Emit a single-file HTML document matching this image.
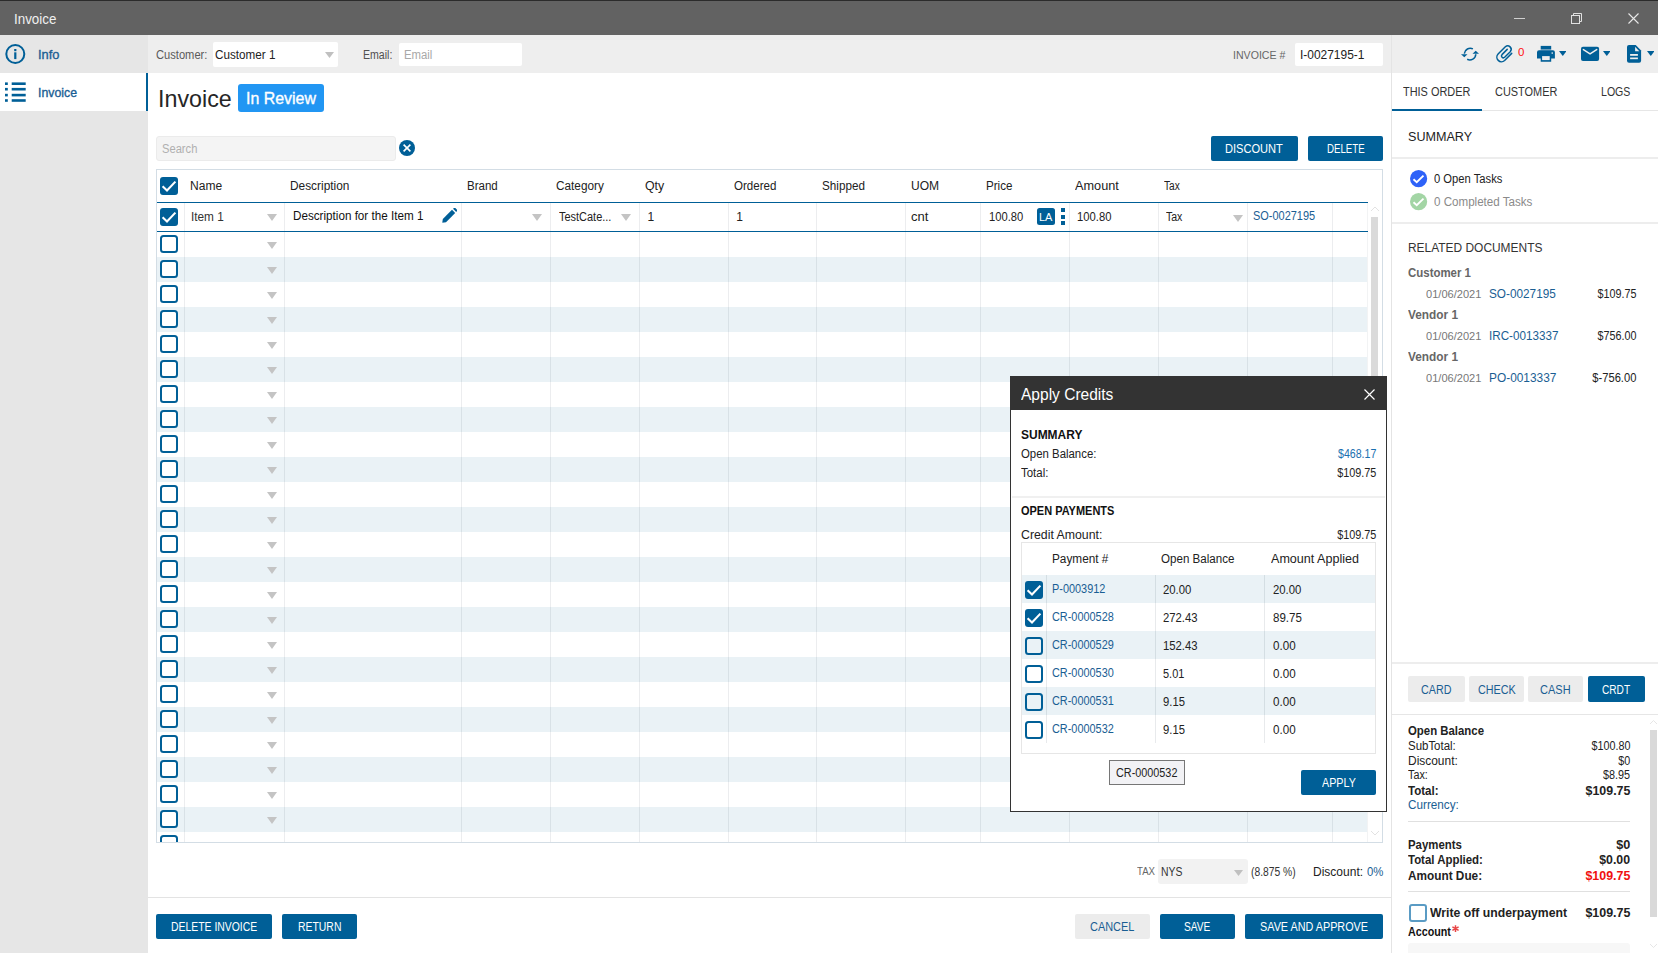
<!DOCTYPE html>
<html><head><meta charset="utf-8"><style>
html,body{margin:0;padding:0;width:1658px;height:953px;overflow:hidden;background:#fff;font-family:'Liberation Sans', sans-serif;}
.a{position:absolute;}
.t{white-space:nowrap;}
</style></head><body>
<div class="a" style="left:0px;top:0px;width:1658px;height:35px;background:#626262;"></div>
<div class="a" style="left:0px;top:0px;width:1658px;height:1px;background:#2b2b2b;"></div>
<span id="t1" class="a t" style="transform:scaleX(0.9558);transform-origin:left center;left:13.70px;top:12.15px;font-size:14px;line-height:14px;color:#f0f0f0;font-weight:normal;">Invoice</span>
<div class="a" style="left:1514px;top:18px;width:11px;height:1px;background:#d0d0d0;"></div>
<svg class="a" style="left:1570px;top:12px" width="13" height="12" viewBox="0 0 13 12"><rect x="1.5" y="3.5" width="8" height="8" fill="none" stroke="#e0e0e0" stroke-width="1"/><path d="M3.5 3.5 V1.5 H11.5 V9.5 H9.5" fill="none" stroke="#e0e0e0" stroke-width="1"/></svg>
<svg class="a" style="left:1628px;top:13px" width="11" height="11" viewBox="0 0 11 11"><path d="M0.5 0.5 L10.5 10.5 M10.5 0.5 L0.5 10.5" stroke="#e8e8e8" stroke-width="1.1"/></svg>
<div class="a" style="left:0px;top:35px;width:148px;height:918px;background:#e6e6e6;"></div>
<div class="a" style="left:0px;top:73px;width:146px;height:38px;background:#ffffff;"></div>
<div class="a" style="left:146px;top:73px;width:2px;height:38px;background:#005f97;"></div>
<svg class="a" style="left:5px;top:44px" width="21" height="21" viewBox="0 0 21 21"><circle cx="10.3" cy="10" r="9" fill="none" stroke="#005f97" stroke-width="2"/><rect x="9.2" y="8.3" width="2.2" height="6.8" fill="#005f97"/><rect x="9.2" y="5" width="2.2" height="2.2" fill="#005f97"/></svg>
<svg class="a" style="left:5px;top:82px" width="22" height="21" viewBox="0 0 22 21"><rect x="0" y="0.4" width="2.8" height="2.6" fill="#005f97"/><rect x="6.7" y="0.4" width="14" height="2.6" fill="#005f97"/><rect x="0" y="5.9" width="2.8" height="2.6" fill="#005f97"/><rect x="6.7" y="5.9" width="14" height="2.6" fill="#005f97"/><rect x="0" y="11.8" width="2.8" height="2.6" fill="#005f97"/><rect x="6.7" y="11.8" width="14" height="2.6" fill="#005f97"/><rect x="0" y="17.2" width="2.8" height="2.6" fill="#005f97"/><rect x="6.7" y="17.2" width="14" height="2.6" fill="#005f97"/></svg>
<span id="t2" class="a t" style="transform:scaleX(0.9867);transform-origin:left center;left:38.10px;top:47.60px;font-size:13px;line-height:13px;color:#1a5e93;font-weight:normal;-webkit-text-stroke:0.35px currentColor;">Info</span>
<span id="t3" class="a t" style="transform:scaleX(0.9465);transform-origin:left center;left:38.10px;top:86.00px;font-size:13px;line-height:13px;color:#1a5e93;font-weight:normal;-webkit-text-stroke:0.35px currentColor;">Invoice</span>
<div class="a" style="left:148px;top:35px;width:1243px;height:38px;background:#eeeeee;"></div>
<div class="a" style="left:1392px;top:35px;width:266px;height:38px;background:#eeeeee;"></div>
<div class="a" style="left:1391px;top:35px;width:1px;height:918px;background:#e4e4e4;"></div>
<span id="t4" class="a t" style="transform:scaleX(0.9285);transform-origin:left center;left:155.70px;top:48.84px;font-size:12px;line-height:12px;color:#5a5a5a;font-weight:normal;">Customer:</span>
<div class="a" style="left:213px;top:42px;width:125px;height:25px;background:#fff;border-radius:2px"></div>
<span id="t5" class="a t" style="transform:scaleX(0.9737);transform-origin:left center;left:214.70px;top:48.84px;font-size:12px;line-height:12px;color:#222;font-weight:normal;">Customer 1</span>
<svg class="a" style="left:325px;top:52px" width="9" height="6" viewBox="0 0 9 6"><path d="M0 0 L9 0 L4.5 6 Z" fill="#c0c0c0"/></svg>
<span id="t6" class="a t" style="transform:scaleX(0.8817);transform-origin:left center;left:362.70px;top:48.84px;font-size:12px;line-height:12px;color:#505050;font-weight:normal;">Email:</span>
<div class="a" style="left:399px;top:43px;width:123px;height:23px;background:#fff;border-radius:2px"></div>
<span id="t7" class="a t" style="transform:scaleX(0.9462);transform-origin:left center;left:403.70px;top:48.84px;font-size:12px;line-height:12px;color:#a8a8a8;font-weight:normal;">Email</span>
<span id="t8" class="a t" style="transform:scaleX(0.9631);transform-origin:left center;left:1232.70px;top:49.69px;font-size:11px;line-height:11px;color:#666;font-weight:normal;">INVOICE #</span>
<div class="a" style="left:1295px;top:43px;width:88px;height:23px;background:#fff;border-radius:2px"></div>
<span id="t9" class="a t" style="transform:scaleX(0.9951);transform-origin:left center;left:1299.70px;top:48.84px;font-size:12px;line-height:12px;color:#222;font-weight:normal;">I-0027195-1</span>
<svg class="a" style="left:1456px;top:42px" width="28" height="24" viewBox="0 0 28 24">
<path d="M16.9 6.9 A6 6 0 0 0 8.3 11.6" fill="none" stroke="#005f97" stroke-width="1.5"/>
<path d="M5 12.2 L11.5 12.2 L8.3 15.3 Z" fill="#005f97"/>
<path d="M11.2 17.3 A6 6 0 0 0 19.8 12.2" fill="none" stroke="#005f97" stroke-width="1.5"/>
<path d="M16.5 11.8 L23 11.8 L19.7 8.7 Z" fill="#005f97"/>
</svg>
<svg class="a" style="left:1490px;top:40px" width="26" height="26" viewBox="0 0 26 26">
<path d="M21.7 13.4 L14.6 20.5 A4.6 4.6 0 0 1 8.1 14.0 L15.33 6.77 A3.47 3.47 0 0 1 20.23 11.67 L14.62 17.27 A1.87 1.87 0 0 1 11.98 14.63 L17.2 9.4" fill="none" stroke="#005f97" stroke-width="1.5" stroke-linecap="round"/>
</svg>
<span id="t10" class="a t" style="transform:scaleX(1.0449);transform-origin:left center;left:1517.80px;top:46.69px;font-size:11px;line-height:11px;color:#ff1010;font-weight:normal;">0</span>
<svg class="a" style="left:1532px;top:40px" width="26" height="26" viewBox="0 0 26 26">
<rect x="8.7" y="5.9" width="10.5" height="3.4" fill="#005f97"/>
<rect x="8.7" y="9.3" width="10.5" height="1" fill="#005f97" opacity="0.5"/>
<path d="M7 10.2 H20.9 A2 2 0 0 1 22.9 12.2 V18.6 H19.2 V21.8 H8.7 V18.6 H5 V12.2 A2 2 0 0 1 7 10.2 Z" fill="#005f97"/>
<rect x="10.1" y="16.1" width="7.6" height="4" fill="#eeeeee"/>
<circle cx="20.2" cy="13.1" r="0.8" fill="#eeeeee"/>
</svg>
<svg class="a" style="left:1558.6px;top:50.9px" width="7.6" height="4.9" viewBox="0 0 7.6 4.9"><path d="M0 0 L7.6 0 L3.8 4.9 Z" fill="#005f97"/></svg>
<svg class="a" style="left:1576px;top:40px" width="26" height="26" viewBox="0 0 26 26">
<rect x="5" y="6.7" width="18.1" height="14.4" rx="2" fill="#005f97"/>
<path d="M7.4 9.6 L14.05 13.8 L20.7 9.6" fill="none" stroke="#eeeeee" stroke-width="1.5" stroke-linecap="round"/>
</svg>
<svg class="a" style="left:1602.6px;top:50.9px" width="7.6" height="4.9" viewBox="0 0 7.6 4.9"><path d="M0 0 L7.6 0 L3.8 4.9 Z" fill="#005f97"/></svg>
<svg class="a" style="left:1620px;top:40px" width="26" height="26" viewBox="0 0 26 26">
<path d="M9 4.9 H15.7 L21.1 10.4 V20.8 A2 2 0 0 1 19.1 22.8 H9 A2 2 0 0 1 7 20.8 V6.9 A2 2 0 0 1 9 4.9 Z" fill="#005f97"/>
<path d="M15.1 6.8 V11.3 H19.3 Z" fill="#eeeeee"/>
<rect x="10.1" y="14" width="7.8" height="1.8" fill="#eeeeee"/><rect x="10.1" y="17.5" width="7.8" height="1.7" fill="#eeeeee"/>
</svg>
<svg class="a" style="left:1646.6px;top:50.9px" width="7.6" height="4.9" viewBox="0 0 7.6 4.9"><path d="M0 0 L7.6 0 L3.8 4.9 Z" fill="#005f97"/></svg>
<span id="t11" class="a t" style="transform:scaleX(0.9691);transform-origin:left center;left:157.60px;top:86.68px;font-size:24px;line-height:24px;color:#262626;font-weight:normal;">Invoice</span>
<div class="a" style="left:238px;top:84px;width:86px;height:28px;background:#2196f3;border-radius:3px"></div>
<span id="t12" class="a t" style="transform:scaleX(0.9964);transform-origin:left center;left:245.70px;top:91.36px;font-size:16px;line-height:16px;color:#fff;font-weight:normal;-webkit-text-stroke:0.35px currentColor;">In Review</span>
<div class="a" style="left:156px;top:136px;width:240px;height:25px;background:#f4f4f4;border:1px solid #ebebeb;box-sizing:border-box;border-radius:3px"></div>
<span id="t13" class="a t" style="transform:scaleX(0.9308);transform-origin:left center;left:161.70px;top:142.54px;font-size:12px;line-height:12px;color:#b0b0b0;font-weight:normal;">Search</span>
<svg class="a" style="left:399px;top:140px" width="16" height="16" viewBox="0 0 16 16"><circle cx="8" cy="8" r="8" fill="#005f97"/><path d="M4.6 4.6 L11.4 11.4 M11.4 4.6 L4.6 11.4" stroke="#fff" stroke-width="1.6"/></svg>
<div class="a" style="left:1211px;top:136px;width:87px;height:25px;background:#005f97;border-radius:2px"></div>
<span id="t14" class="a t" style="transform:scaleX(0.9239);transform-origin:left center;left:1225.45px;top:142.74px;font-size:12px;line-height:12px;color:#fff;font-weight:normal;">DISCOUNT</span>
<div class="a" style="left:1308px;top:136px;width:75px;height:25px;background:#005f97;border-radius:2px"></div>
<span id="t15" class="a t" style="transform:scaleX(0.8075);transform-origin:left center;left:1326.55px;top:142.74px;font-size:12px;line-height:12px;color:#fff;font-weight:normal;">DELETE</span>
<div class="a" style="left:156px;top:169px;width:1227px;height:674px;background:transparent;border:1px solid #d3dde5;box-sizing:border-box"></div>
<div class="a" style="left:157px;top:232px;width:1210px;height:25px;background:#fff;"></div>
<div class="a" style="left:157px;top:257px;width:1210px;height:25px;background:#eaf2f6;"></div>
<div class="a" style="left:157px;top:282px;width:1210px;height:25px;background:#fff;"></div>
<div class="a" style="left:157px;top:307px;width:1210px;height:25px;background:#eaf2f6;"></div>
<div class="a" style="left:157px;top:332px;width:1210px;height:25px;background:#fff;"></div>
<div class="a" style="left:157px;top:357px;width:1210px;height:25px;background:#eaf2f6;"></div>
<div class="a" style="left:157px;top:382px;width:1210px;height:25px;background:#fff;"></div>
<div class="a" style="left:157px;top:407px;width:1210px;height:25px;background:#eaf2f6;"></div>
<div class="a" style="left:157px;top:432px;width:1210px;height:25px;background:#fff;"></div>
<div class="a" style="left:157px;top:457px;width:1210px;height:25px;background:#eaf2f6;"></div>
<div class="a" style="left:157px;top:482px;width:1210px;height:25px;background:#fff;"></div>
<div class="a" style="left:157px;top:507px;width:1210px;height:25px;background:#eaf2f6;"></div>
<div class="a" style="left:157px;top:532px;width:1210px;height:25px;background:#fff;"></div>
<div class="a" style="left:157px;top:557px;width:1210px;height:25px;background:#eaf2f6;"></div>
<div class="a" style="left:157px;top:582px;width:1210px;height:25px;background:#fff;"></div>
<div class="a" style="left:157px;top:607px;width:1210px;height:25px;background:#eaf2f6;"></div>
<div class="a" style="left:157px;top:632px;width:1210px;height:25px;background:#fff;"></div>
<div class="a" style="left:157px;top:657px;width:1210px;height:25px;background:#eaf2f6;"></div>
<div class="a" style="left:157px;top:682px;width:1210px;height:25px;background:#fff;"></div>
<div class="a" style="left:157px;top:707px;width:1210px;height:25px;background:#eaf2f6;"></div>
<div class="a" style="left:157px;top:732px;width:1210px;height:25px;background:#fff;"></div>
<div class="a" style="left:157px;top:757px;width:1210px;height:25px;background:#eaf2f6;"></div>
<div class="a" style="left:157px;top:782px;width:1210px;height:25px;background:#fff;"></div>
<div class="a" style="left:157px;top:807px;width:1210px;height:25px;background:#eaf2f6;"></div>
<div class="a" style="left:157px;top:832px;width:1210px;height:10px;background:#fff;"></div>
<div class="a" style="left:184px;top:203px;width:1px;height:639px;background:rgba(0,20,40,0.075);"></div>
<div class="a" style="left:284px;top:203px;width:1px;height:639px;background:rgba(0,20,40,0.075);"></div>
<div class="a" style="left:461px;top:203px;width:1px;height:639px;background:rgba(0,20,40,0.075);"></div>
<div class="a" style="left:550px;top:203px;width:1px;height:639px;background:rgba(0,20,40,0.075);"></div>
<div class="a" style="left:639px;top:203px;width:1px;height:639px;background:rgba(0,20,40,0.075);"></div>
<div class="a" style="left:728px;top:203px;width:1px;height:639px;background:rgba(0,20,40,0.075);"></div>
<div class="a" style="left:816px;top:203px;width:1px;height:639px;background:rgba(0,20,40,0.075);"></div>
<div class="a" style="left:905px;top:203px;width:1px;height:639px;background:rgba(0,20,40,0.075);"></div>
<div class="a" style="left:980px;top:203px;width:1px;height:639px;background:rgba(0,20,40,0.075);"></div>
<div class="a" style="left:1069px;top:203px;width:1px;height:639px;background:rgba(0,20,40,0.075);"></div>
<div class="a" style="left:1158px;top:203px;width:1px;height:639px;background:rgba(0,20,40,0.075);"></div>
<div class="a" style="left:1247px;top:203px;width:1px;height:639px;background:rgba(0,20,40,0.075);"></div>
<div class="a" style="left:1332px;top:203px;width:1px;height:639px;background:rgba(0,20,40,0.075);"></div>
<svg class="a" style="left:160px;top:177px" width="18" height="18" viewBox="0 0 18 18"><rect x="0" y="0" width="18" height="18" rx="3" fill="#005f97"/><path d="M2.6 9.2 L7 13.4 L15.4 4.6" fill="none" stroke="#fff" stroke-width="2.1"/></svg>
<span id="t16" class="a t" style="transform:scaleX(1.0026);transform-origin:left center;left:190.10px;top:179.84px;font-size:12px;line-height:12px;color:#222;font-weight:normal;">Name</span>
<span id="t17" class="a t" style="transform:scaleX(0.9895);transform-origin:left center;left:290.10px;top:179.84px;font-size:12px;line-height:12px;color:#222;font-weight:normal;">Description</span>
<span id="t18" class="a t" style="transform:scaleX(0.9616);transform-origin:left center;left:466.70px;top:179.84px;font-size:12px;line-height:12px;color:#222;font-weight:normal;">Brand</span>
<span id="t19" class="a t" style="transform:scaleX(0.9815);transform-origin:left center;left:556.00px;top:179.84px;font-size:12px;line-height:12px;color:#222;font-weight:normal;">Category</span>
<span id="t20" class="a t" style="transform:scaleX(1.0283);transform-origin:left center;left:644.70px;top:179.84px;font-size:12px;line-height:12px;color:#222;font-weight:normal;">Qty</span>
<span id="t21" class="a t" style="transform:scaleX(0.9630);transform-origin:left center;left:734.20px;top:179.84px;font-size:12px;line-height:12px;color:#222;font-weight:normal;">Ordered</span>
<span id="t22" class="a t" style="transform:scaleX(0.9740);transform-origin:left center;left:821.90px;top:179.84px;font-size:12px;line-height:12px;color:#222;font-weight:normal;">Shipped</span>
<span id="t23" class="a t" style="transform:scaleX(1.0036);transform-origin:left center;left:910.90px;top:179.84px;font-size:12px;line-height:12px;color:#222;font-weight:normal;">UOM</span>
<span id="t24" class="a t" style="transform:scaleX(0.9655);transform-origin:left center;left:986.00px;top:179.84px;font-size:12px;line-height:12px;color:#222;font-weight:normal;">Price</span>
<span id="t25" class="a t" style="transform:scaleX(1.0590);transform-origin:left center;left:1075.00px;top:179.84px;font-size:12px;line-height:12px;color:#222;font-weight:normal;">Amount</span>
<span id="t26" class="a t" style="transform:scaleX(0.8455);transform-origin:left center;left:1164.20px;top:179.84px;font-size:12px;line-height:12px;color:#222;font-weight:normal;">Tax</span>
<div class="a" style="left:157px;top:202px;width:1211px;height:1px;background:#005f97;"></div>
<div class="a" style="left:157px;top:231px;width:1211px;height:1px;background:#005f97;"></div>
<svg class="a" style="left:160px;top:208px" width="18" height="18" viewBox="0 0 18 18"><rect x="0" y="0" width="18" height="18" rx="3" fill="#005f97"/><path d="M2.6 9.2 L7 13.4 L15.4 4.6" fill="none" stroke="#fff" stroke-width="2.1"/></svg>
<span id="t27" class="a t" style="transform:scaleX(0.9832);transform-origin:left center;left:191.20px;top:211.04px;font-size:12px;line-height:12px;color:#333;font-weight:normal;">Item 1</span>
<svg class="a" style="left:267px;top:214px" width="10" height="7" viewBox="0 0 10 7"><path d="M0 0 L10 0 L5.0 7 Z" fill="#c4c4c4"/></svg>
<span id="t28" class="a t" style="transform:scaleX(0.9727);transform-origin:left center;left:293.20px;top:210.34px;font-size:12px;line-height:12px;color:#111;font-weight:normal;">Description for the Item 1</span>
<svg class="a" style="left:441.6px;top:208.4px" width="15" height="15" viewBox="0 0 15 15"><path d="M0.3 14.7 L0.8 11 L10 1.8 L13.2 5 L4 14.2 Z" fill="#005f97"/><path d="M11 0.8 L12 0 A1 1 0 0 1 13.3 0 L15 1.7 A1 1 0 0 1 15 3 L14.2 4" fill="#005f97"/></svg>
<svg class="a" style="left:532px;top:214px" width="10" height="7" viewBox="0 0 10 7"><path d="M0 0 L10 0 L5.0 7 Z" fill="#c4c4c4"/></svg>
<span id="t29" class="a t" style="transform:scaleX(0.9135);transform-origin:left center;left:559.10px;top:211.04px;font-size:12px;line-height:12px;color:#222;font-weight:normal;">TestCate...</span>
<svg class="a" style="left:621px;top:214px" width="10" height="7" viewBox="0 0 10 7"><path d="M0 0 L10 0 L5.0 7 Z" fill="#c4c4c4"/></svg>
<span id="t30" class="a t" style="left:647.40px;top:211.34px;font-size:12px;line-height:12px;color:#222;font-weight:normal;">1</span>
<span id="t31" class="a t" style="left:736.30px;top:211.34px;font-size:12px;line-height:12px;color:#222;font-weight:normal;">1</span>
<span id="t32" class="a t" style="transform:scaleX(1.0864);transform-origin:left center;left:910.90px;top:210.64px;font-size:12px;line-height:12px;color:#222;font-weight:normal;">cnt</span>
<span id="t33" class="a t" style="transform:scaleX(0.9318);transform-origin:left center;left:988.70px;top:211.34px;font-size:12px;line-height:12px;color:#222;font-weight:normal;">100.80</span>
<svg class="a" style="left:1037px;top:208px" width="18" height="17" viewBox="0 0 18 17"><rect width="18" height="17" rx="2.5" fill="#005f97"/></svg>
<span id="t34" class="a t" style="transform:scaleX(0.9949);transform-origin:left center;left:1039.20px;top:211.69px;font-size:11px;line-height:11px;color:#fff;font-weight:normal;">LA</span>
<div class="a" style="left:1061px;top:208px;width:4px;height:4px;background:#005f97;"></div>
<div class="a" style="left:1061px;top:214.5px;width:4px;height:4px;background:#005f97;"></div>
<div class="a" style="left:1061px;top:221px;width:4px;height:4px;background:#005f97;"></div>
<span id="t35" class="a t" style="transform:scaleX(0.9372);transform-origin:left center;left:1077.40px;top:211.34px;font-size:12px;line-height:12px;color:#222;font-weight:normal;">100.80</span>
<span id="t36" class="a t" style="transform:scaleX(0.8776);transform-origin:left center;left:1165.50px;top:211.34px;font-size:12px;line-height:12px;color:#222;font-weight:normal;">Tax</span>
<svg class="a" style="left:1233px;top:215px" width="10" height="7" viewBox="0 0 10 7"><path d="M0 0 L10 0 L5.0 7 Z" fill="#c4c4c4"/></svg>
<span id="t37" class="a t" style="transform:scaleX(0.9124);transform-origin:left center;left:1252.70px;top:210.44px;font-size:12px;line-height:12px;color:#1a5e93;font-weight:normal;">SO-0027195</span>
<svg class="a" style="left:160px;top:235px" width="18" height="18" viewBox="0 0 18 18"><rect x="1" y="1" width="16" height="16" rx="2.5" fill="#fff" stroke="#005f97" stroke-width="2"/></svg>
<svg class="a" style="left:267px;top:242px" width="10" height="7" viewBox="0 0 10 7"><path d="M0 0 L10 0 L5.0 7 Z" fill="#c4c4c4"/></svg>
<svg class="a" style="left:160px;top:260px" width="18" height="18" viewBox="0 0 18 18"><rect x="1" y="1" width="16" height="16" rx="2.5" fill="#fff" stroke="#005f97" stroke-width="2"/></svg>
<svg class="a" style="left:267px;top:267px" width="10" height="7" viewBox="0 0 10 7"><path d="M0 0 L10 0 L5.0 7 Z" fill="#c4c4c4"/></svg>
<svg class="a" style="left:160px;top:285px" width="18" height="18" viewBox="0 0 18 18"><rect x="1" y="1" width="16" height="16" rx="2.5" fill="#fff" stroke="#005f97" stroke-width="2"/></svg>
<svg class="a" style="left:267px;top:292px" width="10" height="7" viewBox="0 0 10 7"><path d="M0 0 L10 0 L5.0 7 Z" fill="#c4c4c4"/></svg>
<svg class="a" style="left:160px;top:310px" width="18" height="18" viewBox="0 0 18 18"><rect x="1" y="1" width="16" height="16" rx="2.5" fill="#fff" stroke="#005f97" stroke-width="2"/></svg>
<svg class="a" style="left:267px;top:317px" width="10" height="7" viewBox="0 0 10 7"><path d="M0 0 L10 0 L5.0 7 Z" fill="#c4c4c4"/></svg>
<svg class="a" style="left:160px;top:335px" width="18" height="18" viewBox="0 0 18 18"><rect x="1" y="1" width="16" height="16" rx="2.5" fill="#fff" stroke="#005f97" stroke-width="2"/></svg>
<svg class="a" style="left:267px;top:342px" width="10" height="7" viewBox="0 0 10 7"><path d="M0 0 L10 0 L5.0 7 Z" fill="#c4c4c4"/></svg>
<svg class="a" style="left:160px;top:360px" width="18" height="18" viewBox="0 0 18 18"><rect x="1" y="1" width="16" height="16" rx="2.5" fill="#fff" stroke="#005f97" stroke-width="2"/></svg>
<svg class="a" style="left:267px;top:367px" width="10" height="7" viewBox="0 0 10 7"><path d="M0 0 L10 0 L5.0 7 Z" fill="#c4c4c4"/></svg>
<svg class="a" style="left:160px;top:385px" width="18" height="18" viewBox="0 0 18 18"><rect x="1" y="1" width="16" height="16" rx="2.5" fill="#fff" stroke="#005f97" stroke-width="2"/></svg>
<svg class="a" style="left:267px;top:392px" width="10" height="7" viewBox="0 0 10 7"><path d="M0 0 L10 0 L5.0 7 Z" fill="#c4c4c4"/></svg>
<svg class="a" style="left:160px;top:410px" width="18" height="18" viewBox="0 0 18 18"><rect x="1" y="1" width="16" height="16" rx="2.5" fill="#fff" stroke="#005f97" stroke-width="2"/></svg>
<svg class="a" style="left:267px;top:417px" width="10" height="7" viewBox="0 0 10 7"><path d="M0 0 L10 0 L5.0 7 Z" fill="#c4c4c4"/></svg>
<svg class="a" style="left:160px;top:435px" width="18" height="18" viewBox="0 0 18 18"><rect x="1" y="1" width="16" height="16" rx="2.5" fill="#fff" stroke="#005f97" stroke-width="2"/></svg>
<svg class="a" style="left:267px;top:442px" width="10" height="7" viewBox="0 0 10 7"><path d="M0 0 L10 0 L5.0 7 Z" fill="#c4c4c4"/></svg>
<svg class="a" style="left:160px;top:460px" width="18" height="18" viewBox="0 0 18 18"><rect x="1" y="1" width="16" height="16" rx="2.5" fill="#fff" stroke="#005f97" stroke-width="2"/></svg>
<svg class="a" style="left:267px;top:467px" width="10" height="7" viewBox="0 0 10 7"><path d="M0 0 L10 0 L5.0 7 Z" fill="#c4c4c4"/></svg>
<svg class="a" style="left:160px;top:485px" width="18" height="18" viewBox="0 0 18 18"><rect x="1" y="1" width="16" height="16" rx="2.5" fill="#fff" stroke="#005f97" stroke-width="2"/></svg>
<svg class="a" style="left:267px;top:492px" width="10" height="7" viewBox="0 0 10 7"><path d="M0 0 L10 0 L5.0 7 Z" fill="#c4c4c4"/></svg>
<svg class="a" style="left:160px;top:510px" width="18" height="18" viewBox="0 0 18 18"><rect x="1" y="1" width="16" height="16" rx="2.5" fill="#fff" stroke="#005f97" stroke-width="2"/></svg>
<svg class="a" style="left:267px;top:517px" width="10" height="7" viewBox="0 0 10 7"><path d="M0 0 L10 0 L5.0 7 Z" fill="#c4c4c4"/></svg>
<svg class="a" style="left:160px;top:535px" width="18" height="18" viewBox="0 0 18 18"><rect x="1" y="1" width="16" height="16" rx="2.5" fill="#fff" stroke="#005f97" stroke-width="2"/></svg>
<svg class="a" style="left:267px;top:542px" width="10" height="7" viewBox="0 0 10 7"><path d="M0 0 L10 0 L5.0 7 Z" fill="#c4c4c4"/></svg>
<svg class="a" style="left:160px;top:560px" width="18" height="18" viewBox="0 0 18 18"><rect x="1" y="1" width="16" height="16" rx="2.5" fill="#fff" stroke="#005f97" stroke-width="2"/></svg>
<svg class="a" style="left:267px;top:567px" width="10" height="7" viewBox="0 0 10 7"><path d="M0 0 L10 0 L5.0 7 Z" fill="#c4c4c4"/></svg>
<svg class="a" style="left:160px;top:585px" width="18" height="18" viewBox="0 0 18 18"><rect x="1" y="1" width="16" height="16" rx="2.5" fill="#fff" stroke="#005f97" stroke-width="2"/></svg>
<svg class="a" style="left:267px;top:592px" width="10" height="7" viewBox="0 0 10 7"><path d="M0 0 L10 0 L5.0 7 Z" fill="#c4c4c4"/></svg>
<svg class="a" style="left:160px;top:610px" width="18" height="18" viewBox="0 0 18 18"><rect x="1" y="1" width="16" height="16" rx="2.5" fill="#fff" stroke="#005f97" stroke-width="2"/></svg>
<svg class="a" style="left:267px;top:617px" width="10" height="7" viewBox="0 0 10 7"><path d="M0 0 L10 0 L5.0 7 Z" fill="#c4c4c4"/></svg>
<svg class="a" style="left:160px;top:635px" width="18" height="18" viewBox="0 0 18 18"><rect x="1" y="1" width="16" height="16" rx="2.5" fill="#fff" stroke="#005f97" stroke-width="2"/></svg>
<svg class="a" style="left:267px;top:642px" width="10" height="7" viewBox="0 0 10 7"><path d="M0 0 L10 0 L5.0 7 Z" fill="#c4c4c4"/></svg>
<svg class="a" style="left:160px;top:660px" width="18" height="18" viewBox="0 0 18 18"><rect x="1" y="1" width="16" height="16" rx="2.5" fill="#fff" stroke="#005f97" stroke-width="2"/></svg>
<svg class="a" style="left:267px;top:667px" width="10" height="7" viewBox="0 0 10 7"><path d="M0 0 L10 0 L5.0 7 Z" fill="#c4c4c4"/></svg>
<svg class="a" style="left:160px;top:685px" width="18" height="18" viewBox="0 0 18 18"><rect x="1" y="1" width="16" height="16" rx="2.5" fill="#fff" stroke="#005f97" stroke-width="2"/></svg>
<svg class="a" style="left:267px;top:692px" width="10" height="7" viewBox="0 0 10 7"><path d="M0 0 L10 0 L5.0 7 Z" fill="#c4c4c4"/></svg>
<svg class="a" style="left:160px;top:710px" width="18" height="18" viewBox="0 0 18 18"><rect x="1" y="1" width="16" height="16" rx="2.5" fill="#fff" stroke="#005f97" stroke-width="2"/></svg>
<svg class="a" style="left:267px;top:717px" width="10" height="7" viewBox="0 0 10 7"><path d="M0 0 L10 0 L5.0 7 Z" fill="#c4c4c4"/></svg>
<svg class="a" style="left:160px;top:735px" width="18" height="18" viewBox="0 0 18 18"><rect x="1" y="1" width="16" height="16" rx="2.5" fill="#fff" stroke="#005f97" stroke-width="2"/></svg>
<svg class="a" style="left:267px;top:742px" width="10" height="7" viewBox="0 0 10 7"><path d="M0 0 L10 0 L5.0 7 Z" fill="#c4c4c4"/></svg>
<svg class="a" style="left:160px;top:760px" width="18" height="18" viewBox="0 0 18 18"><rect x="1" y="1" width="16" height="16" rx="2.5" fill="#fff" stroke="#005f97" stroke-width="2"/></svg>
<svg class="a" style="left:267px;top:767px" width="10" height="7" viewBox="0 0 10 7"><path d="M0 0 L10 0 L5.0 7 Z" fill="#c4c4c4"/></svg>
<svg class="a" style="left:160px;top:785px" width="18" height="18" viewBox="0 0 18 18"><rect x="1" y="1" width="16" height="16" rx="2.5" fill="#fff" stroke="#005f97" stroke-width="2"/></svg>
<svg class="a" style="left:267px;top:792px" width="10" height="7" viewBox="0 0 10 7"><path d="M0 0 L10 0 L5.0 7 Z" fill="#c4c4c4"/></svg>
<svg class="a" style="left:160px;top:810px" width="18" height="18" viewBox="0 0 18 18"><rect x="1" y="1" width="16" height="16" rx="2.5" fill="#fff" stroke="#005f97" stroke-width="2"/></svg>
<svg class="a" style="left:267px;top:817px" width="10" height="7" viewBox="0 0 10 7"><path d="M0 0 L10 0 L5.0 7 Z" fill="#c4c4c4"/></svg>
<svg class="a" style="left:160px;top:835px" width="18" height="18" viewBox="0 0 18 18"><rect x="1" y="1" width="16" height="16" rx="2.5" fill="#fff" stroke="#005f97" stroke-width="2"/></svg>
<svg class="a" style="left:267px;top:842px" width="10" height="7" viewBox="0 0 10 7"><path d="M0 0 L10 0 L5.0 7 Z" fill="#c4c4c4"/></svg>
<div class="a" style="left:156px;top:843px;width:1227px;height:50px;background:#fff;"></div>
<div class="a" style="left:156px;top:842px;width:1227px;height:1px;background:#d3dde5;"></div>
<svg class="a" style="left:1370px;top:205px" width="10" height="7" viewBox="0 0 10 7"><path d="M1 6 L5 2 L9 6" fill="none" stroke="#e2e2e2" stroke-width="1"/></svg>
<div class="a" style="left:1371.3px;top:216.5px;width:7px;height:160px;background:#dadada;"></div>
<div class="a" style="left:1367px;top:203px;width:1px;height:639px;background:rgba(0,20,40,0.05);"></div>
<svg class="a" style="left:1370px;top:830px" width="10" height="7" viewBox="0 0 10 7"><path d="M1 1 L5 5 L9 1" fill="none" stroke="#e2e2e2" stroke-width="1"/></svg>
<div class="a" style="left:148px;top:897px;width:1243px;height:1px;background:#e3e3e3;"></div>
<span id="t38" class="a t" style="transform:scaleX(0.8747);transform-origin:left center;left:1136.70px;top:866.49px;font-size:11px;line-height:11px;color:#666;font-weight:normal;">TAX</span>
<div class="a" style="left:1158px;top:859px;width:90px;height:25px;background:#f2f2f2;border-radius:3px"></div>
<span id="t39" class="a t" style="transform:scaleX(0.8668);transform-origin:left center;left:1161.10px;top:865.84px;font-size:12px;line-height:12px;color:#333;font-weight:normal;">NYS</span>
<svg class="a" style="left:1234px;top:870px" width="9" height="6" viewBox="0 0 9 6"><path d="M0 0 L9 0 L4.5 6 Z" fill="#c0c0c0"/></svg>
<span id="t40" class="a t" style="transform:scaleX(0.8591);transform-origin:left center;left:1251.10px;top:865.84px;font-size:12px;line-height:12px;color:#333;font-weight:normal;">(8.875 %)</span>
<span id="t41" class="a t" style="transform:scaleX(1.0014);transform-origin:left center;left:1312.70px;top:865.84px;font-size:12px;line-height:12px;color:#222;font-weight:normal;">Discount:</span>
<span id="t42" class="a t" style="transform:scaleX(0.9456);transform-origin:left center;left:1366.70px;top:865.84px;font-size:12px;line-height:12px;color:#1a5e93;font-weight:normal;">0%</span>
<div class="a" style="left:1075px;top:914px;width:75px;height:25px;background:#ececec;border-radius:2px"></div>
<span id="t43" class="a t" style="transform:scaleX(0.9119);transform-origin:left center;left:1090.20px;top:920.64px;font-size:12px;line-height:12px;color:#1a5e93;font-weight:normal;">CANCEL</span>
<div class="a" style="left:1160px;top:914px;width:75px;height:25px;background:#005f97;border-radius:2px"></div>
<span id="t44" class="a t" style="transform:scaleX(0.8482);transform-origin:left center;left:1184.20px;top:920.64px;font-size:12px;line-height:12px;color:#fff;font-weight:normal;">SAVE</span>
<div class="a" style="left:1245px;top:914px;width:138px;height:25px;background:#005f97;border-radius:2px"></div>
<span id="t45" class="a t" style="transform:scaleX(0.9013);transform-origin:left center;left:1259.90px;top:920.64px;font-size:12px;line-height:12px;color:#fff;font-weight:normal;">SAVE AND APPROVE</span>
<div class="a" style="left:156px;top:914px;width:116px;height:25px;background:#005f97;border-radius:2px"></div>
<span id="t46" class="a t" style="transform:scaleX(0.8676);transform-origin:left center;left:170.80px;top:920.64px;font-size:12px;line-height:12px;color:#fff;font-weight:normal;">DELETE INVOICE</span>
<div class="a" style="left:282px;top:914px;width:75px;height:25px;background:#005f97;border-radius:2px"></div>
<span id="t47" class="a t" style="transform:scaleX(0.8680);transform-origin:left center;left:297.70px;top:920.64px;font-size:12px;line-height:12px;color:#fff;font-weight:normal;">RETURN</span>
<span id="t48" class="a t" style="transform:scaleX(0.9106);transform-origin:left center;left:1403.10px;top:85.84px;font-size:12px;line-height:12px;color:#333;font-weight:normal;">THIS ORDER</span>
<span id="t49" class="a t" style="transform:scaleX(0.9116);transform-origin:left center;left:1495.00px;top:85.84px;font-size:12px;line-height:12px;color:#333;font-weight:normal;">CUSTOMER</span>
<span id="t50" class="a t" style="transform:scaleX(0.8813);transform-origin:left center;left:1601.30px;top:85.84px;font-size:12px;line-height:12px;color:#333;font-weight:normal;">LOGS</span>
<div class="a" style="left:1392px;top:110px;width:266px;height:1px;background:#e6e6e6;"></div>
<div class="a" style="left:1392px;top:109px;width:90px;height:2px;background:#005f97;"></div>
<span id="t51" class="a t" style="transform:scaleX(1.0487);transform-origin:left center;left:1408.00px;top:130.64px;font-size:12px;line-height:12px;color:#222;font-weight:normal;">SUMMARY</span>
<div class="a" style="left:1392px;top:157px;width:266px;height:2px;background:#ededed;"></div>
<svg class="a" style="left:1410px;top:170px" width="18" height="18" viewBox="0 0 18 18"><circle cx="8.6" cy="8.7" r="8.6" fill="#2e62f8"/><path d="M3.5 9.3 L6.7 12.1 L13.5 5.6" fill="none" stroke="#fff" stroke-width="1.9"/></svg>
<span id="t52" class="a t" style="transform:scaleX(0.9350);transform-origin:left center;left:1433.70px;top:172.94px;font-size:12px;line-height:12px;color:#222;font-weight:normal;">0 Open Tasks</span>
<svg class="a" style="left:1410px;top:193px" width="18" height="18" viewBox="0 0 18 18"><circle cx="8.6" cy="8.7" r="8.6" fill="#a3d5a5"/><path d="M3.5 9.3 L6.7 12.1 L13.5 5.6" fill="none" stroke="#fff" stroke-width="1.9"/></svg>
<span id="t53" class="a t" style="transform:scaleX(0.9662);transform-origin:left center;left:1433.70px;top:195.54px;font-size:12px;line-height:12px;color:#8a8a8a;font-weight:normal;">0 Completed Tasks</span>
<div class="a" style="left:1392px;top:222px;width:266px;height:2px;background:#ededed;"></div>
<span id="t54" class="a t" style="transform:scaleX(0.9946);transform-origin:left center;left:1408.10px;top:242.44px;font-size:12px;line-height:12px;color:#333;font-weight:normal;">RELATED DOCUMENTS</span>
<span id="t55" class="a t" style="transform:scaleX(0.9541);transform-origin:left center;left:1408.20px;top:266.54px;font-size:12px;line-height:12px;color:#666;font-weight:bold;">Customer 1</span>
<span id="t56" class="a t" style="transform:scaleX(1.0061);transform-origin:left center;left:1425.70px;top:289.19px;font-size:11px;line-height:11px;color:#777;font-weight:normal;">01/06/2021</span>
<span id="t57" class="a t" style="transform:scaleX(0.9060);transform-origin:left center;left:1488.70px;top:286.70px;font-size:13px;line-height:13px;color:#1a5e93;font-weight:normal;">SO-0027195</span>
<span id="t58" class="a t" style="transform:scaleX(0.8965);transform-origin:right center;right:21.70px;top:287.54px;font-size:12px;line-height:12px;color:#222;font-weight:normal;">$109.75</span>
<span id="t59" class="a t" style="transform:scaleX(0.9864);transform-origin:left center;left:1408.20px;top:308.54px;font-size:12px;line-height:12px;color:#666;font-weight:bold;">Vendor 1</span>
<span id="t60" class="a t" style="transform:scaleX(1.0061);transform-origin:left center;left:1425.70px;top:331.19px;font-size:11px;line-height:11px;color:#777;font-weight:normal;">01/06/2021</span>
<span id="t61" class="a t" style="transform:scaleX(0.8975);transform-origin:left center;left:1488.70px;top:328.70px;font-size:13px;line-height:13px;color:#1a5e93;font-weight:normal;">IRC-0013337</span>
<span id="t62" class="a t" style="transform:scaleX(0.8965);transform-origin:right center;right:21.70px;top:329.54px;font-size:12px;line-height:12px;color:#222;font-weight:normal;">$756.00</span>
<span id="t63" class="a t" style="transform:scaleX(0.9864);transform-origin:left center;left:1408.20px;top:350.54px;font-size:12px;line-height:12px;color:#666;font-weight:bold;">Vendor 1</span>
<span id="t64" class="a t" style="transform:scaleX(1.0061);transform-origin:left center;left:1425.70px;top:373.19px;font-size:11px;line-height:11px;color:#777;font-weight:normal;">01/06/2021</span>
<span id="t65" class="a t" style="transform:scaleX(0.9141);transform-origin:left center;left:1488.70px;top:370.70px;font-size:13px;line-height:13px;color:#1a5e93;font-weight:normal;">PO-0013337</span>
<span id="t66" class="a t" style="transform:scaleX(0.9309);transform-origin:right center;right:21.70px;top:371.54px;font-size:12px;line-height:12px;color:#222;font-weight:normal;">$-756.00</span>
<div class="a" style="left:1392px;top:662px;width:266px;height:2px;background:#ededed;"></div>
<div class="a" style="left:1408px;top:676px;width:57px;height:26px;background:#ececec;border-radius:2px"></div>
<span id="t67" class="a t" style="transform:scaleX(0.8937);transform-origin:left center;left:1421.20px;top:683.94px;font-size:12px;line-height:12px;color:#1a5e93;font-weight:normal;">CARD</span>
<div class="a" style="left:1469px;top:676px;width:55px;height:26px;background:#ececec;border-radius:2px"></div>
<span id="t68" class="a t" style="transform:scaleX(0.8997);transform-origin:left center;left:1477.50px;top:683.94px;font-size:12px;line-height:12px;color:#1a5e93;font-weight:normal;">CHECK</span>
<div class="a" style="left:1528px;top:676px;width:55px;height:26px;background:#ececec;border-radius:2px"></div>
<span id="t69" class="a t" style="transform:scaleX(0.9177);transform-origin:left center;left:1540.10px;top:683.94px;font-size:12px;line-height:12px;color:#1a5e93;font-weight:normal;">CASH</span>
<div class="a" style="left:1588px;top:676px;width:57px;height:26px;background:#005f97;border-radius:2px"></div>
<span id="t70" class="a t" style="transform:scaleX(0.8431);transform-origin:left center;left:1602.35px;top:683.94px;font-size:12px;line-height:12px;color:#fff;font-weight:normal;">CRDT</span>
<div class="a" style="left:1392px;top:714px;width:266px;height:1px;background:#e6e6e6;"></div>
<svg class="a" style="left:1649px;top:719px" width="9" height="6" viewBox="0 0 9 6"><path d="M1 5 L4.5 1.5 L8 5" fill="none" stroke="#e6e6e6" stroke-width="1"/></svg>
<div class="a" style="left:1650px;top:730px;width:7px;height:187px;background:#d9d9d9;"></div>
<svg class="a" style="left:1649px;top:943px" width="9" height="6" viewBox="0 0 9 6"><path d="M1 1 L4.5 4.5 L8 1" fill="none" stroke="#e6e6e6" stroke-width="1"/></svg>
<span id="t71" class="a t" style="transform:scaleX(0.9496);transform-origin:left center;left:1407.80px;top:724.54px;font-size:12px;line-height:12px;color:#222;font-weight:bold;">Open Balance</span>
<span id="t72" class="a t" style="transform:scaleX(0.9551);transform-origin:left center;left:1407.70px;top:739.84px;font-size:12px;line-height:12px;color:#222;font-weight:normal;">SubTotal:</span>
<span id="t73" class="a t" style="transform:scaleX(0.8965);transform-origin:right center;right:27.70px;top:739.84px;font-size:12px;line-height:12px;color:#222;font-weight:normal;">$100.80</span>
<span id="t74" class="a t" style="transform:scaleX(0.9954);transform-origin:left center;left:1407.70px;top:754.84px;font-size:12px;line-height:12px;color:#222;font-weight:normal;">Discount:</span>
<span id="t75" class="a t" style="transform:scaleX(0.8982);transform-origin:right center;right:27.70px;top:754.84px;font-size:12px;line-height:12px;color:#222;font-weight:normal;">$0</span>
<span id="t76" class="a t" style="transform:scaleX(0.8994);transform-origin:left center;left:1407.70px;top:769.44px;font-size:12px;line-height:12px;color:#222;font-weight:normal;">Tax:</span>
<span id="t77" class="a t" style="transform:scaleX(0.9024);transform-origin:right center;right:27.70px;top:769.44px;font-size:12px;line-height:12px;color:#222;font-weight:normal;">$8.95</span>
<span id="t78" class="a t" style="transform:scaleX(0.9628);transform-origin:left center;left:1407.70px;top:784.54px;font-size:12px;line-height:12px;color:#222;font-weight:bold;">Total:</span>
<span id="t79" class="a t" style="transform:scaleX(1.0325);transform-origin:right center;right:27.70px;top:784.54px;font-size:12px;line-height:12px;color:#222;font-weight:bold;">$109.75</span>
<span id="t80" class="a t" style="transform:scaleX(0.9766);transform-origin:left center;left:1407.70px;top:799.34px;font-size:12px;line-height:12px;color:#1a5e93;font-weight:normal;">Currency:</span>
<div class="a" style="left:1408px;top:821px;width:222px;height:1px;background:#e0e0e0;"></div>
<span id="t81" class="a t" style="transform:scaleX(0.9506);transform-origin:left center;left:1408.20px;top:839.44px;font-size:12px;line-height:12px;color:#222;font-weight:bold;">Payments</span>
<span id="t82" class="a t" style="transform:scaleX(1.0554);transform-origin:right center;right:27.70px;top:839.44px;font-size:12px;line-height:12px;color:#222;font-weight:bold;">$0</span>
<span id="t83" class="a t" style="transform:scaleX(0.9522);transform-origin:left center;left:1408.20px;top:854.44px;font-size:12px;line-height:12px;color:#222;font-weight:bold;">Total Applied:</span>
<span id="t84" class="a t" style="transform:scaleX(1.0256);transform-origin:right center;right:27.70px;top:854.44px;font-size:12px;line-height:12px;color:#222;font-weight:bold;">$0.00</span>
<span id="t85" class="a t" style="transform:scaleX(0.9837);transform-origin:left center;left:1408.20px;top:869.54px;font-size:12px;line-height:12px;color:#222;font-weight:bold;">Amount Due:</span>
<span id="t86" class="a t" style="transform:scaleX(1.0371);transform-origin:right center;right:27.70px;top:869.54px;font-size:12px;line-height:12px;color:#f01010;font-weight:bold;">$109.75</span>
<div class="a" style="left:1408px;top:891px;width:222px;height:1px;background:#e0e0e0;"></div>
<svg class="a" style="left:1409px;top:904px" width="18" height="18" viewBox="0 0 18 18"><rect x="1" y="1" width="16" height="16" rx="2" fill="#fff" stroke="#5a9bc4" stroke-width="2"/></svg>
<span id="t87" class="a t" style="transform:scaleX(1.0188);transform-origin:left center;left:1429.90px;top:907.24px;font-size:12px;line-height:12px;color:#222;font-weight:bold;">Write off underpayment</span>
<span id="t88" class="a t" style="transform:scaleX(1.0371);transform-origin:right center;right:27.70px;top:907.24px;font-size:12px;line-height:12px;color:#222;font-weight:bold;">$109.75</span>
<span id="t89" class="a t" style="transform:scaleX(0.8937);transform-origin:left center;left:1408.20px;top:926.44px;font-size:12px;line-height:12px;color:#111;font-weight:bold;">Account</span>
<svg class="a" style="left:1451px;top:925px" width="9" height="8" viewBox="0 0 9 8"><path d="M4.5 0.3 V7 M1.4 1.9 L7.6 5.4 M7.6 1.9 L1.4 5.4" stroke="#e84545" stroke-width="1.5"/></svg>
<div class="a" style="left:1408px;top:943px;width:222px;height:12px;background:#f7f7f7;border-radius:3px"></div>
<div class="a" style="left:1010px;top:376px;width:377px;height:436px;background:#fff;border:1px solid #333;box-sizing:border-box"></div>
<div class="a" style="left:1010px;top:376px;width:377px;height:34px;background:#333333;"></div>
<span id="t90" class="a t" style="transform:scaleX(0.9710);transform-origin:left center;left:1021.20px;top:387.46px;font-size:16px;line-height:16px;color:#fff;font-weight:normal;">Apply Credits</span>
<svg class="a" style="left:1364px;top:389px" width="11" height="11" viewBox="0 0 11 11"><path d="M0.5 0.5 L10.5 10.5 M10.5 0.5 L0.5 10.5" stroke="#fff" stroke-width="1.2"/></svg>
<span id="t91" class="a t" style="transform:scaleX(0.9974);transform-origin:left center;left:1020.70px;top:428.64px;font-size:12px;line-height:12px;color:#111;font-weight:bold;">SUMMARY</span>
<span id="t92" class="a t" style="transform:scaleX(0.9497);transform-origin:left center;left:1021.10px;top:447.64px;font-size:12px;line-height:12px;color:#222;font-weight:normal;">Open Balance:</span>
<span id="t93" class="a t" style="transform:scaleX(0.8850);transform-origin:right center;right:281.70px;top:447.64px;font-size:12px;line-height:12px;color:#1a70b0;font-weight:normal;">$468.17</span>
<span id="t94" class="a t" style="transform:scaleX(0.9551);transform-origin:left center;left:1021.10px;top:466.64px;font-size:12px;line-height:12px;color:#222;font-weight:normal;">Total:</span>
<span id="t95" class="a t" style="transform:scaleX(0.9034);transform-origin:right center;right:281.70px;top:466.64px;font-size:12px;line-height:12px;color:#222;font-weight:normal;">$109.75</span>
<div class="a" style="left:1012px;top:496px;width:373px;height:2px;background:#f0f0f0;"></div>
<span id="t96" class="a t" style="transform:scaleX(0.9154);transform-origin:left center;left:1021.20px;top:505.24px;font-size:12px;line-height:12px;color:#111;font-weight:bold;">OPEN PAYMENTS</span>
<span id="t97" class="a t" style="transform:scaleX(1.0255);transform-origin:left center;left:1021.20px;top:528.84px;font-size:12px;line-height:12px;color:#222;font-weight:normal;">Credit Amount:</span>
<span id="t98" class="a t" style="transform:scaleX(0.9034);transform-origin:right center;right:281.70px;top:528.84px;font-size:12px;line-height:12px;color:#222;font-weight:normal;">$109.75</span>
<div class="a" style="left:1021px;top:542px;width:355px;height:212px;background:transparent;border:1px solid #e6e6e6;box-sizing:border-box"></div>
<span id="t99" class="a t" style="transform:scaleX(0.9830);transform-origin:left center;left:1052.30px;top:552.84px;font-size:12px;line-height:12px;color:#222;font-weight:normal;">Payment #</span>
<span id="t100" class="a t" style="transform:scaleX(0.9650);transform-origin:left center;left:1161.00px;top:552.84px;font-size:12px;line-height:12px;color:#222;font-weight:normal;">Open Balance</span>
<span id="t101" class="a t" style="transform:scaleX(1.0468);transform-origin:left center;left:1270.70px;top:552.84px;font-size:12px;line-height:12px;color:#222;font-weight:normal;">Amount Applied</span>
<div class="a" style="left:1022px;top:575px;width:353px;height:28px;background:#eaf2f6;"></div>
<div class="a" style="left:1022px;top:603px;width:353px;height:28px;background:#fff;"></div>
<div class="a" style="left:1022px;top:631px;width:353px;height:28px;background:#eaf2f6;"></div>
<div class="a" style="left:1022px;top:659px;width:353px;height:28px;background:#fff;"></div>
<div class="a" style="left:1022px;top:687px;width:353px;height:28px;background:#eaf2f6;"></div>
<div class="a" style="left:1022px;top:715px;width:353px;height:28px;background:#fff;"></div>
<div class="a" style="left:1046px;top:575px;width:1px;height:168px;background:rgba(0,20,40,0.09);"></div>
<div class="a" style="left:1155px;top:575px;width:1px;height:168px;background:rgba(0,20,40,0.09);"></div>
<div class="a" style="left:1264px;top:575px;width:1px;height:168px;background:rgba(0,20,40,0.09);"></div>
<svg class="a" style="left:1025px;top:581px" width="18" height="18" viewBox="0 0 18 18"><rect x="0" y="0" width="18" height="18" rx="3" fill="#005f97"/><path d="M2.6 9.2 L7 13.4 L15.4 4.6" fill="none" stroke="#fff" stroke-width="2.1"/></svg>
<span id="t102" class="a t" style="transform:scaleX(0.9094);transform-origin:left center;left:1052.30px;top:582.84px;font-size:12px;line-height:12px;color:#1a5e93;font-weight:normal;">P-0003912</span>
<span id="t103" class="a t" style="transform:scaleX(0.9457);transform-origin:left center;left:1162.80px;top:583.84px;font-size:12px;line-height:12px;color:#222;font-weight:normal;">20.00</span>
<span id="t104" class="a t" style="transform:scaleX(0.9457);transform-origin:left center;left:1272.50px;top:583.84px;font-size:12px;line-height:12px;color:#222;font-weight:normal;">20.00</span>
<svg class="a" style="left:1025px;top:609px" width="18" height="18" viewBox="0 0 18 18"><rect x="0" y="0" width="18" height="18" rx="3" fill="#005f97"/><path d="M2.6 9.2 L7 13.4 L15.4 4.6" fill="none" stroke="#fff" stroke-width="2.1"/></svg>
<span id="t105" class="a t" style="transform:scaleX(0.9082);transform-origin:left center;left:1052.30px;top:610.84px;font-size:12px;line-height:12px;color:#1a5e93;font-weight:normal;">CR-0000528</span>
<span id="t106" class="a t" style="transform:scaleX(0.9427);transform-origin:left center;left:1162.80px;top:611.84px;font-size:12px;line-height:12px;color:#222;font-weight:normal;">272.43</span>
<span id="t107" class="a t" style="transform:scaleX(0.9623);transform-origin:left center;left:1272.50px;top:611.84px;font-size:12px;line-height:12px;color:#222;font-weight:normal;">89.75</span>
<svg class="a" style="left:1025px;top:637px" width="18" height="18" viewBox="0 0 18 18"><rect x="1" y="1" width="16" height="16" rx="2.5" fill="#eaf2f6" stroke="#005f97" stroke-width="2"/></svg>
<span id="t108" class="a t" style="transform:scaleX(0.9082);transform-origin:left center;left:1052.30px;top:638.84px;font-size:12px;line-height:12px;color:#1a5e93;font-weight:normal;">CR-0000529</span>
<span id="t109" class="a t" style="transform:scaleX(0.9427);transform-origin:left center;left:1162.80px;top:639.84px;font-size:12px;line-height:12px;color:#222;font-weight:normal;">152.43</span>
<span id="t110" class="a t" style="transform:scaleX(0.9675);transform-origin:left center;left:1272.50px;top:639.84px;font-size:12px;line-height:12px;color:#222;font-weight:normal;">0.00</span>
<svg class="a" style="left:1025px;top:665px" width="18" height="18" viewBox="0 0 18 18"><rect x="1" y="1" width="16" height="16" rx="2.5" fill="#fff" stroke="#005f97" stroke-width="2"/></svg>
<span id="t111" class="a t" style="transform:scaleX(0.9082);transform-origin:left center;left:1052.30px;top:666.84px;font-size:12px;line-height:12px;color:#1a5e93;font-weight:normal;">CR-0000530</span>
<span id="t112" class="a t" style="transform:scaleX(0.9118);transform-origin:left center;left:1162.80px;top:667.84px;font-size:12px;line-height:12px;color:#222;font-weight:normal;">5.01</span>
<span id="t113" class="a t" style="transform:scaleX(0.9675);transform-origin:left center;left:1272.50px;top:667.84px;font-size:12px;line-height:12px;color:#222;font-weight:normal;">0.00</span>
<svg class="a" style="left:1025px;top:693px" width="18" height="18" viewBox="0 0 18 18"><rect x="1" y="1" width="16" height="16" rx="2.5" fill="#eaf2f6" stroke="#005f97" stroke-width="2"/></svg>
<span id="t114" class="a t" style="transform:scaleX(0.9082);transform-origin:left center;left:1052.30px;top:694.84px;font-size:12px;line-height:12px;color:#1a5e93;font-weight:normal;">CR-0000531</span>
<span id="t115" class="a t" style="transform:scaleX(0.9375);transform-origin:left center;left:1162.80px;top:695.84px;font-size:12px;line-height:12px;color:#222;font-weight:normal;">9.15</span>
<span id="t116" class="a t" style="transform:scaleX(0.9675);transform-origin:left center;left:1272.50px;top:695.84px;font-size:12px;line-height:12px;color:#222;font-weight:normal;">0.00</span>
<svg class="a" style="left:1025px;top:721px" width="18" height="18" viewBox="0 0 18 18"><rect x="1" y="1" width="16" height="16" rx="2.5" fill="#fff" stroke="#005f97" stroke-width="2"/></svg>
<span id="t117" class="a t" style="transform:scaleX(0.9082);transform-origin:left center;left:1052.30px;top:722.84px;font-size:12px;line-height:12px;color:#1a5e93;font-weight:normal;">CR-0000532</span>
<span id="t118" class="a t" style="transform:scaleX(0.9375);transform-origin:left center;left:1162.80px;top:723.84px;font-size:12px;line-height:12px;color:#222;font-weight:normal;">9.15</span>
<span id="t119" class="a t" style="transform:scaleX(0.9675);transform-origin:left center;left:1272.50px;top:723.84px;font-size:12px;line-height:12px;color:#222;font-weight:normal;">0.00</span>
<div class="a" style="left:1109px;top:760px;width:76px;height:25px;background:#f2f2f5;border:1px solid #767676;box-sizing:border-box"></div>
<span id="t120" class="a t" style="transform:scaleX(0.9023);transform-origin:left center;left:1116.30px;top:766.64px;font-size:12px;line-height:12px;color:#222;font-weight:normal;">CR-0000532</span>
<div class="a" style="left:1301px;top:770px;width:75px;height:25px;background:#005f97;border-radius:2px"></div>
<span id="t121" class="a t" style="transform:scaleX(0.8939);transform-origin:left center;left:1321.50px;top:776.84px;font-size:12px;line-height:12px;color:#fff;font-weight:normal;">APPLY</span>
</body></html>
